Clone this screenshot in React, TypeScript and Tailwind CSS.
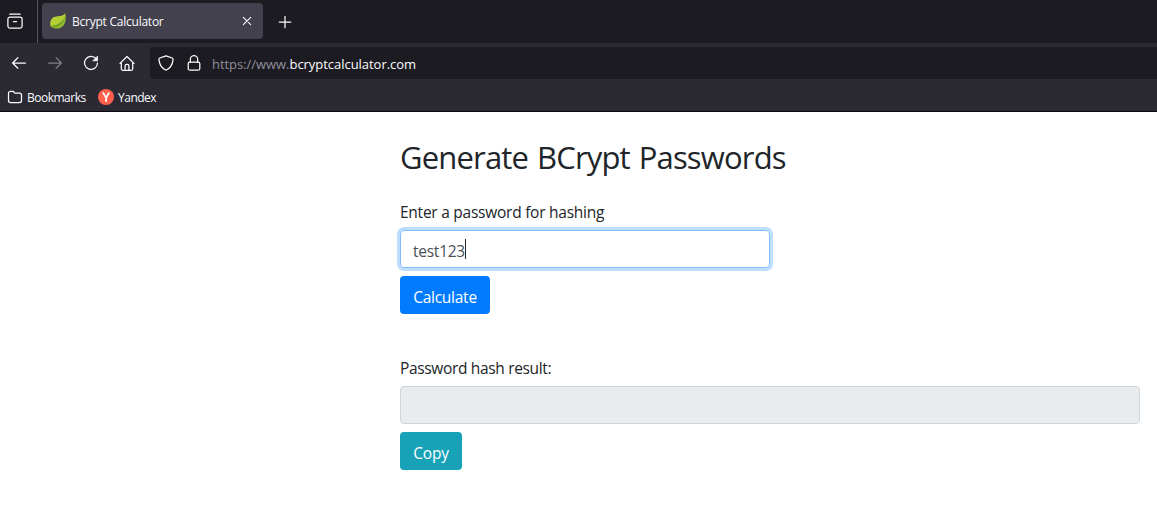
import type { ReactNode } from 'react';

function Icon({ children, className = '' }: { children: ReactNode; className?: string }) {
  return (
    <svg viewBox="0 0 16 16" fill="none" stroke="currentColor" strokeWidth="1.25" strokeLinecap="round" strokeLinejoin="round" className={`size-4 shrink-0 text-[#fbfbfe] ${className}`}>
      {children}
    </svg>
  );
}

function TabBar() {
  return (
    <div className="flex h-[43px] bg-[#1c1b22]">
      <div className="flex w-[38px] shrink-0 border-r border-[#54535d] pt-[13px] pl-[7px]">
        <Icon>
          <path d="M2.8 1.2h10.4M3 4h10a2.1 2.1 0 0 1 2.1 2.1v7a2.1 2.1 0 0 1-2.1 2.1H3a2.1 2.1 0 0 1-2.1-2.1v-7A2.1 2.1 0 0 1 3 4zM6.5 8.5h3" />
        </Icon>
      </div>
      <div className="mt-[3px] ml-1 flex h-9 w-[221px] items-center rounded bg-[#42414d] pl-2">
        <svg viewBox="0 0 16 16" className="size-4 shrink-0">
          <path d="M15.4.5c.8 5.4.4 10-3.1 13.2-3.1 2.7-8.5 2.2-11.6.1-.8-3.6-.3-7.2 2.3-9C6.5 2.4 12 4.6 15.4.5z" fill="#8fb92c" />
          <path d="M15.3.6C12 4.7 6.6 2.5 3 4.8.6 6.4 0 9.8.5 12.8 7.6 11.8 14.8 8.7 15.3.6z" fill="#b4ce36" />
          <path d="M.6 13.5C6.4 13.2 12 10.2 14.2 4.8c-.9 5.8-6.5 9.8-12.1 9.7z" fill="#6f9c27" />
        </svg>
        <span className="mt-[2px] ml-[6px] text-[12px] leading-4 tracking-[-0.24px] text-[#fbfbfe]">Bcrypt Calculator</span>
        <Icon className="mr-2 ml-auto"><path d="m4.3 4.3 7.4 7.4m0-7.4-7.4 7.4" strokeWidth="1.1" /></Icon>
      </div>
      <Icon className="mt-[14px] ml-[14px]"><path d="M8 2.3v11.4M2.3 8h11.4" /></Icon>
    </div>
  );
}

function NavBar() {
  return (
    <div className="flex h-[40px] items-center bg-[#2b2a33] pl-[11px]">
      <Icon><path d="M14.4 8H1.8m5-5.2L1.6 8l5.2 5.2" /></Icon>
      <Icon className="ml-5 opacity-40"><path d="M1.6 8h12.6m-5-5.2L14.4 8l-5.2 5.2" /></Icon>
      <Icon className="ml-5">
        <path d="M13.2 4A6.5 6.5 0 1 0 14.5 8" />
        <path d="M14.5 1.5v4.3h-4.3z" fill="currentColor" strokeWidth="0.8" />
      </Icon>
      <Icon className="ml-5">
        <path d="M1 8.4 8 1.5l7 6.9M2.3 7.7v6.1a1.5 1.5 0 0 0 1.5 1.5h8.4a1.5 1.5 0 0 0 1.5-1.5V7.7M6.1 15v-4.1a1.5 1.5 0 0 1 1.5-1.5h.8a1.5 1.5 0 0 1 1.5 1.5V15" />
      </Icon>
      <div className="ml-[15px] flex h-8 flex-1 items-center rounded-l bg-[#1c1b22] pl-2">
        <Icon><path d="M8 .8 14.2 3c.9.3 1 1 .8 2.1-.6 4.8-3 8.2-7 10.1-4-1.9-6.4-5.3-7-10.1C.8 4 1 3.3 1.8 3z" /></Icon>
        <Icon className="ml-3"><rect x="2.2" y="7" width="11.6" height="8.2" rx="1.8" /><path d="M4.3 7V4.3a3.7 3.7 0 0 1 7.4 0V7" /></Icon>
        <span className="mt-[2px] ml-[10px] text-[13px] leading-5 tracking-[-0.04px] text-[#8f8f98]">https://www.<span className="text-[#fbfbfe]">bcryptcalculator.com</span></span>
      </div>
    </div>
  );
}

function BookmarksBar() {
  return (
    <div className="flex h-[29px] items-center border-b border-[#08080a] bg-[#2b2a33] pl-[7px] text-[12px] tracking-[-0.5px] text-[#fbfbfe]">
      <Icon><path d="M3.5 2.3h2.7l1.7 1.8h4.6a2 2 0 0 1 2 2v5.5a2 2 0 0 1-2 2h-9a2 2 0 0 1-2-2V4.3a2 2 0 0 1 2-2z" /></Icon>
      <span className="mt-[2px] ml-1 w-[71px]">Bookmarks</span>
      <svg viewBox="0 0 16 16" className="size-4 shrink-0">
        <circle cx="8" cy="8" r="8" fill="#ff604d" />
        <path d="m4.9 3.5 3.2 5.1 3.1-5.1M8.1 8.5v4.3" stroke="white" strokeWidth="1.7" fill="none" />
      </svg>
      <span className="mt-[2px] ml-1">Yandex</span>
    </div>
  );
}

export default function App() {
  return (
    <div className="flex h-[507px] flex-col overflow-hidden bg-white font-['Open_Sans','Noto_Sans',sans-serif]">
      <header>
        <TabBar />
        <NavBar />
        <BookmarksBar />
      </header>
      <main className="ml-[400px] flex w-[740px] flex-col items-start text-[15.5px] leading-6 tracking-[-0.25px] text-[#212529]">
        <h1 className="mt-[26px] text-[31px] leading-[38px] tracking-[-0.82px] whitespace-nowrap [word-spacing:1.6px]">Generate BCrypt Passwords</h1>
        <label className="mt-6">Enter a password for hashing</label>
        <div className="mt-[6px] flex h-[38px] w-[370px] items-center rounded border border-[#80bdff] px-3 text-[#495057] shadow-[0_0_0_3px_#bfdeff]">
          <span className="mt-[3px]">test123</span>
          <span className="h-5 w-px bg-[#212529]" />
        </div>
        <button className="mt-2 flex h-[38px] w-[90px] items-center justify-center rounded bg-[#007bff] pt-[3px] tracking-[-0.25px] text-white">Calculate</button>
        <label className="mt-[42px] tracking-[-0.34px]">Password hash result:</label>
        <div className="mt-[6px] h-[38px] w-[740px] rounded border border-[#ced4da] bg-[#e9ecef]" />
        <button className="mt-2 flex h-[38px] w-[62px] items-center justify-center rounded bg-[#17a2b8] pt-[3px] tracking-[-0.25px] text-white">Copy</button>
      </main>
    </div>
  );
}
